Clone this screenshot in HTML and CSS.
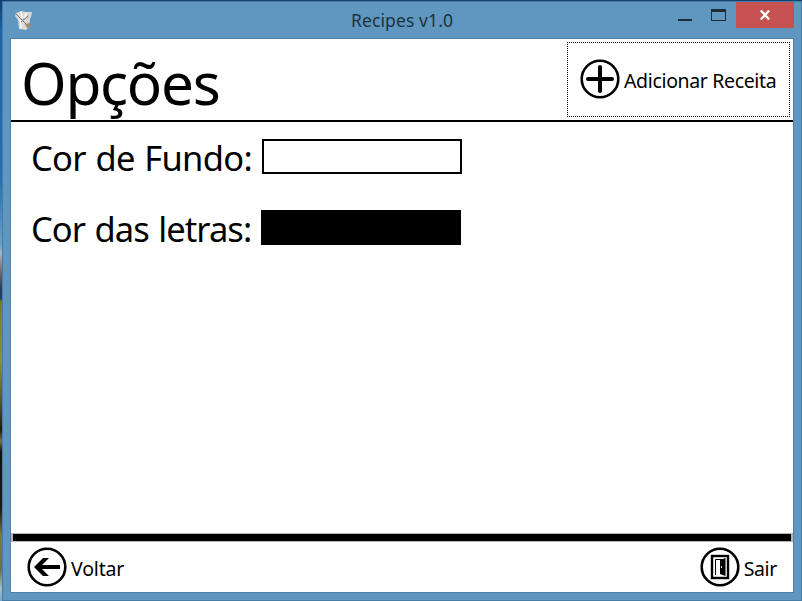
FILE: index.html
```html
<!DOCTYPE html>
<html lang="pt">
<head>
<meta charset="utf-8">
<title>Recipes v1.0</title>
<link rel="stylesheet" href="styles.css">
</head>
<body>
<div class="window">
  <header class="titlebar">
    <svg class="app-icon" width="18" height="20" viewBox="0 0 18 20">
      <path d="M1 2L6 0L11 1L17 1L16 6L15 8L14 16L11 19L4 18L3 9L0 5Z" fill="#d6dadb"/>
      <path d="M6 1L7 7M11 2L10 7M5 9L6 17" stroke="#f6f6f4" stroke-width="2" fill="none"/>
      <path d="M14 3L12 8M4 10L4 16" stroke="#b5bdc0" stroke-width="1" fill="none"/>
      <path d="M1 3L12 14M13 5L6 11" stroke="#886e60" stroke-width="1" fill="none"/>
      <path d="M10 13L15 12L15 16L12 17Z" fill="#ad8866"/>
    </svg>
    <h1 class="caption">Recipes v1.0</h1>
    <div class="controls">
      <svg class="glyph" width="60" height="27" viewBox="0 0 60 27">
        <rect x="2" y="17" width="14" height="2" fill="#1d2b35"/>
        <path d="M35 7H50V19H35Z M36 10V18H49V10Z" fill="#1d2b35" fill-rule="evenodd"/>
      </svg>
      <button class="close" aria-label="Fechar">
        <svg width="12" height="10" viewBox="0 0 12 10"><path d="M1.8 .5L10.2 9.5M10.2 .5L1.8 9.5" stroke="#fff" stroke-width="2.3"/></svg>
      </button>
    </div>
  </header>
  <main class="client">
    <section class="heading">
      <h2 class="page-title">Opções</h2>
      <button class="add">
        <svg width="40" height="40" viewBox="0 0 40 40" fill="none" stroke="#000">
          <circle cx="20" cy="20" r="18.3" stroke-width="2.6"/>
          <path d="M20 8V32M8 20H32" stroke-width="4" stroke-linecap="round"/>
        </svg>
        <span class="label add-label">Adicionar Receita</span>
      </button>
    </section>
    <section class="options">
      <div class="row"><span class="name name-back">Cor de Fundo:</span><span class="swatch white"></span></div>
      <div class="row"><span class="name name-text">Cor das letras:</span><span class="swatch black"></span></div>
    </section>
    <div class="divider"></div>
    <footer class="footer">
      <button class="action">
        <svg width="40" height="40" viewBox="0 0 40 40" fill="none" stroke="#000">
          <circle cx="20" cy="20" r="18.3" stroke-width="2.6"/>
          <path d="M7 20L16 11H22L15 18H33V22H15L22 29H16Z" fill="#000" stroke="none"/>
        </svg>
        <span class="label back-label">Voltar</span>
      </button>
      <button class="action">
        <svg width="40" height="40" viewBox="0 0 40 40" fill="none" stroke="#000">
          <circle cx="20" cy="20" r="18.3" stroke-width="2.6"/>
          <rect x="12" y="9" width="16" height="22" stroke-width="2.4"/>
          <path d="M15.5 28V12.5H25" stroke-width="1"/>
          <path d="M20 13L25.5 11V29L20 27Z" fill="#000" stroke="none"/>
          <path d="M21.5 19V21" stroke="#fff" stroke-width="1"/>
        </svg>
        <span class="label exit-label">Sair</span>
      </button>
    </footer>
  </main>
</div>
</body>
</html>
```
FILE: styles.css
```css
* { box-sizing: border-box; }

body {
  margin: 0;
  width: 802px;
  height: 601px;
  overflow: hidden;
  padding: 1px 0 0 2px;
  background: linear-gradient(#123f70 0, #1a65a5 30px, #2870af 180px, #69a0c8 245px, #a3b8c5 253px, #806e68 270px, #233f60 288px, #233f60 298px, #718028 302px, #8d9233 360px, #4e6020 400px, #17200c 430px, #6d7930 441px, #0c150c 452px, #18200e 510px, #718035 535px, #65783a 570px, #a4bfca 588px, #72aacb 601px);
  font-family: "Noto Sans", sans-serif;
  color: #000;
}

h1, h2 { margin: 0; font-weight: 400; }

button {
  margin: 0;
  padding: 0;
  border: 0;
  background: none;
  font: inherit;
  color: inherit;
}

svg { display: block; flex: none; }

.window {
  display: flex;
  flex-direction: column;
  width: 800px;
  height: 600px;
  padding: 0 7px 7px;
  border: 1px solid #467da7;
  background: #5f97c0;
}

.titlebar {
  display: flex;
  height: 36px;
  flex: none;
}

.app-icon { margin: 9px 0 0 5px; }

.caption {
  margin: 5px 0 0 318px;
  width: 110px;
  font-size: 17.5px;
  line-height: 26px;
  letter-spacing: 0.1px;
  color: #1d3240;
  white-space: nowrap;
}

.controls {
  display: flex;
  margin-left: auto;
}

.close {
  display: flex;
  justify-content: center;
  width: 58px;
  height: 26px;
  padding: 8px 1px 0 0;
  background: #c75050;
}

.client {
  display: flex;
  flex-direction: column;
  flex: 1;
  border: 1px solid #4f81a6;
  background: #fff;
}

.heading {
  display: flex;
  justify-content: space-between;
  height: 83px;
  padding: 3px 3px 0 10px;
  border-bottom: 2px solid #000;
}

.page-title {
  font-size: 58.5px;
  line-height: 80px;
  letter-spacing: -1.3px;
  white-space: nowrap;
}

.add {
  display: flex;
  align-items: center;
  width: 223px;
  height: 75px;
  padding: 0 0 1px 12px;
  border: 1px dotted #000;
}

.label {
  font-size: 19.5px;
  line-height: 28px;
  letter-spacing: -0.35px;
  white-space: nowrap;
}

.add-label { margin: 4px 0 0 4px; }

.options {
  display: flex;
  flex-direction: column;
  gap: 36px;
  flex: 1;
  padding: 17px 0 0 20px;
}

.row {
  display: flex;
  align-items: center;
  height: 35px;
}

.name {
  width: 231px;
  padding-top: 2px;
  font-size: 34.5px;
  line-height: 48px;
  letter-spacing: -0.7px;
  word-spacing: 1.3px;
  white-space: nowrap;
}

.name-text {
  width: 230px;
  letter-spacing: -0.95px;
  word-spacing: 1.5px;
}

.swatch {
  width: 200px;
  height: 35px;
  border: 2px solid #000;
}

.black { background: #000; }

.divider {
  height: 9px;
  border: solid #b4b4b4;
  border-width: 1px 2px 1px;
  background: #000;
}

.footer {
  display: flex;
  justify-content: space-between;
  height: 50px;
  padding: 5px 16px 0 16px;
}

.action {
  display: flex;
  align-items: center;
  height: 40px;
}

.back-label, .exit-label { margin: 4px 0 0 4px; }

.back-label { letter-spacing: -0.15px; }
```
